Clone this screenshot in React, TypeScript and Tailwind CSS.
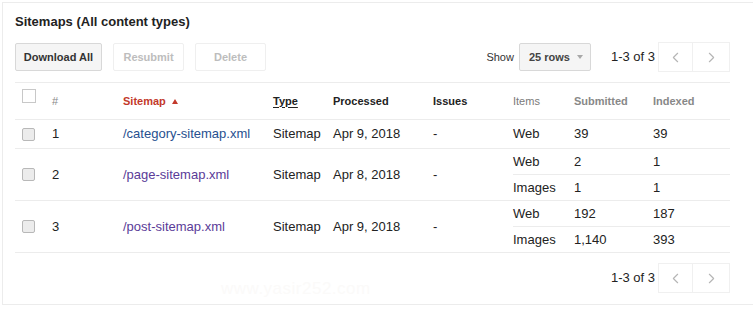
import { ChevronLeft, ChevronRight } from "lucide-react";

type Sub = { item: string; submitted: string; indexed: string };
type Row = { n: string; path: string; color: string; processed: string; subs: Sub[] };

const rows: Row[] = [
  {
    n: "1",
    path: "/category-sitemap.xml",
    color: "text-[#27508f]",
    processed: "Apr 9, 2018",
    subs: [{ item: "Web", submitted: "39", indexed: "39" }],
  },
  {
    n: "2",
    path: "/page-sitemap.xml",
    color: "text-[#5a3b98]",
    processed: "Apr 8, 2018",
    subs: [
      { item: "Web", submitted: "2", indexed: "1" },
      { item: "Images", submitted: "1", indexed: "1" },
    ],
  },
  {
    n: "3",
    path: "/post-sitemap.xml",
    color: "text-[#5a3b98]",
    processed: "Apr 9, 2018",
    subs: [
      { item: "Web", submitted: "192", indexed: "187" },
      { item: "Images", submitted: "1,140", indexed: "393" },
    ],
  },
];

function Pager() {
  return (
    <div className="flex items-center">
      <span className="text-[13px] text-[#222] mr-[3px]">1-3 of 3</span>
      <button className="w-[35px] h-[30px] flex items-center justify-center border border-[#f0f0f0] bg-white">
        <ChevronLeft size={17} strokeWidth={1.6} className="text-[#b5b5b5]" />
      </button>
      <button className="w-[37px] h-[30px] flex items-center justify-center border border-l-0 border-[#f0f0f0] bg-white">
        <ChevronRight size={17} strokeWidth={1.6} className="text-[#b5b5b5]" />
      </button>
    </div>
  );
}

function Check({ head }: { head?: boolean }) {
  return head ? (
    <div className="w-[14px] h-[14px] border border-[#c8c8c8] bg-white" />
  ) : (
    <div className="w-[13px] h-[13px] rounded-[2px] border border-[#b8b8b8] bg-[#ececec]" />
  );
}

export default function App() {
  return (
    <div className="relative w-[751px] h-[303px] mt-[2px] ml-[2px] border-l border-t border-b border-[#ececec] bg-white pl-[12px] font-['Liberation_Sans',Arial,sans-serif] text-[#222]">
      <div className="pt-[11px] text-[13px] leading-[16px] font-bold text-[#222]">
        Sitemaps (All content types)
      </div>

      <div className="mt-[12px] w-[715px] flex items-center justify-between">
        <div className="flex gap-[11px]">
          <button className="w-[87px] h-[28px] rounded-[2px] border border-[#d8d8d8] bg-[#f5f5f5] text-[11px] font-bold text-[#333]">
            Download All
          </button>
          <button className="w-[71px] h-[28px] rounded-[2px] border border-[#efefef] bg-white text-[11px] font-bold text-[#bdbdbd]">
            Resubmit
          </button>
          <button className="w-[71px] h-[28px] rounded-[2px] border border-[#efefef] bg-white text-[11px] font-bold text-[#bdbdbd]">
            Delete
          </button>
        </div>
        <div className="flex items-center">
          <span className="text-[11px] text-[#333] mr-[5px]">Show</span>
          <div className="w-[72px] h-[28px] rounded-[2px] border border-[#d8d8d8] bg-[#f5f5f5] flex items-center pl-[9px] mr-[20px]">
            <span className="text-[11px] font-bold text-[#444]">25 rows</span>
            <span className="ml-[7px] w-0 h-0 border-l-[3.5px] border-r-[3.5px] border-t-[4px] border-l-transparent border-r-transparent border-t-[#a8a8a8]" />
          </div>
          <Pager />
        </div>
      </div>

      <div className="mt-[10px] w-[715px]">
        <div className="flex h-[38px] border-t border-b border-[#ececec] text-[11px] font-bold">
          <div className="w-[37px] pl-[7px] pt-[6px]">
            <Check head />
          </div>
          <div className="w-[71px] flex items-center font-normal text-[#888]">#</div>
          <div className="w-[150px] flex items-center text-[#c3392b]">
            Sitemap
            <span className="ml-[6px] w-0 h-0 border-l-[3.5px] border-r-[3.5px] border-b-[5px] border-l-transparent border-r-transparent border-b-[#c3392b]" />
          </div>
          <div className="w-[60px] flex items-center underline underline-offset-2">Type</div>
          <div className="w-[100px] flex items-center">Processed</div>
          <div className="w-[80px] flex items-center">Issues</div>
          <div className="w-[61px] flex items-center font-normal text-[#7a7a7a]">Items</div>
          <div className="w-[79px] flex items-center text-[#888]">Submitted</div>
          <div className="w-[77px] flex items-center text-[#888]">Indexed</div>
        </div>

        {rows.map((r) => (
          <div key={r.n} className="flex border-b border-[#ececec] text-[13px]">
            <div className="w-[37px] pl-[7px] flex items-center">
              <Check />
            </div>
            <div className="w-[71px] flex items-center">{r.n}</div>
            <div className={`w-[150px] flex items-center ${r.color}`}>{r.path}</div>
            <div className="w-[60px] flex items-center">Sitemap</div>
            <div className="w-[100px] flex items-center">{r.processed}</div>
            <div className="w-[80px] flex items-center">-</div>
            <div className="w-[217px] flex flex-col">
              {r.subs.map((s, i) => (
                <div
                  key={s.item}
                  className={`flex items-center ${
                    r.subs.length === 1 ? "h-[28px]" : i === 0 ? "h-[26px] border-b border-[#ececec]" : "h-[25px]"
                  }`}
                >
                  <div className="w-[61px]">{s.item}</div>
                  <div className="w-[79px]">{s.submitted}</div>
                  <div className="w-[77px]">{s.indexed}</div>
                </div>
              ))}
            </div>
          </div>
        ))}
      </div>

      <div className="mt-[10px] w-[715px] flex justify-end">
        <Pager />
      </div>

      <div className="absolute left-[218px] top-[273px] text-[17px] tracking-[0.5px] text-[#fbfaf9] select-none">
        www.yasir252.com
      </div>
    </div>
  );
}
